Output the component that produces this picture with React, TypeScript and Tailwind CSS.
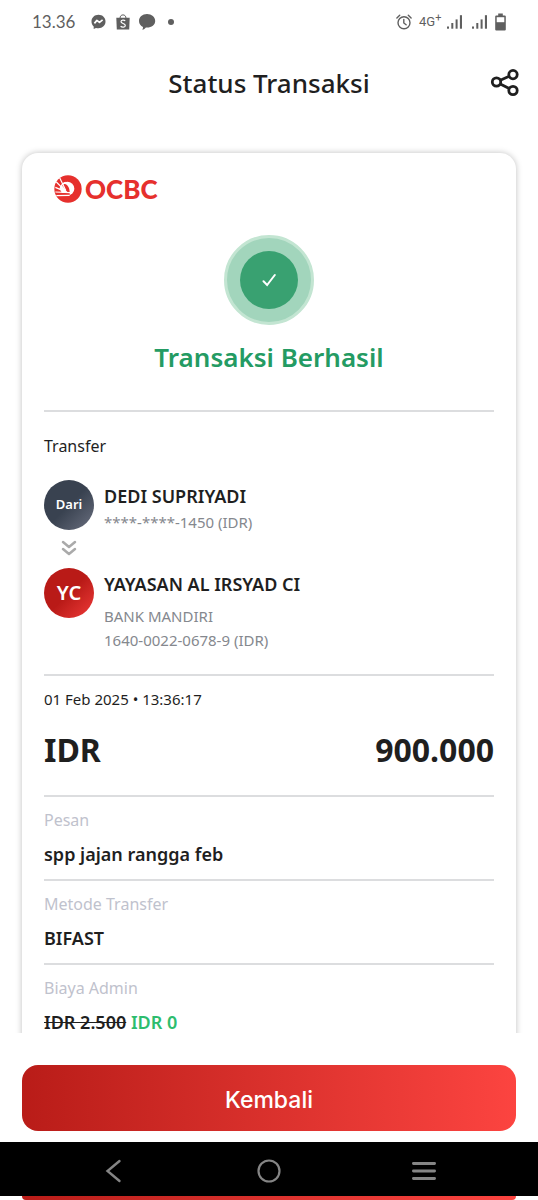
import type { ReactNode } from "react";

function SignalIcon() {
  return (
    <svg viewBox="0 0 15 14" className="h-3.5 w-[15px]" fill="#5f5f5f">
      <rect x="0" y="11.5" width="2" height="2.2" />
      <rect x="4.3" y="8" width="2" height="5.7" />
      <rect x="8.6" y="4.4" width="2" height="9.3" />
      <rect x="12.9" y="0.2" width="2.1" height="13.5" />
    </svg>
  );
}

function StatusBar() {
  return (
    <div className="flex h-11 shrink-0 items-center justify-between px-8 text-[#5f5f5f]">
      <div className="flex items-center">
        <span className="w-[59px] font-['Lato',sans-serif] text-[17px]">13.36</span>
        <svg viewBox="0 0 15 16" className="mr-2.5 h-4 w-[15px]">
          <path
            d="M7.5.8C3.5.8.5 3.7.5 7.5c0 2 .8 3.7 2.2 4.9v2.6l2.3-1.1c.8.2 1.6.3 2.5.3 4 0 7-2.9 7-6.7S11.5.8 7.5.8z"
            fill="#5f5f5f"
          />
          <path
            d="M3.4 9.4l2.5-3 2.6 2 3.1-2.5"
            fill="none"
            stroke="#fff"
            strokeWidth="1.7"
            strokeLinejoin="round"
          />
        </svg>
        <svg viewBox="0 0 14 16" className="mr-2 h-4 w-3.5">
          <path d="M.3 3.8h13.4l-.5 11.6H.8z" fill="#5f5f5f" />
          <path d="M4 4.5C4 2 5.3.9 7 .9s3 1.1 3 3.6" fill="none" stroke="#5f5f5f" />
          <path
            d="M9.2 6.9C8.3 5.9 5 5.8 5 7.7c0 2 4.3 1.5 4.3 3.7 0 2-3.2 2.2-4.7.8"
            fill="none"
            stroke="#fff"
            strokeWidth="1.2"
          />
        </svg>
        <svg viewBox="0 0 18 16" className="h-4 w-[18px]" fill="#5f5f5f">
          <path d="M9 .1C4.4.1 1 3.1 1 7c0 2.7 1.5 4.8 4 5.900 0 1.200-.2 2-.7 2.800 1.600-.3 2.700-.9 3.600-2.200H9c4.700 0 8.200-2.800 8.200-6.600S13.600.1 9 .1z" />
        </svg>
        <span className="ml-3 size-1.5 rounded-full bg-[#5f5f5f]" />
      </div>
      <div className="flex items-center">
        <svg
          viewBox="0 0 16 16"
          className="size-4"
          fill="none"
          stroke="#5f5f5f"
          strokeWidth="1.4"
          strokeLinecap="round"
        >
          <circle cx="8" cy="8.7" r="6" />
          <path d="M7.8 5.5v3.5l2.3 1.8M.9 4l2.8-2.7M15.1 4l-2.8-2.7" />
        </svg>
        <span className="w-[35px] pl-[7px] font-['Roboto',sans-serif] text-[13px]">
          4G<sup className="text-[11px]">+</sup>
        </span>
        <SignalIcon />
        <span className="w-2.5" />
        <SignalIcon />
        <svg viewBox="0 0 11 18" className="ml-2 h-[18px] w-[11px]">
          <path d="M3.2.5h4.6v2h2a1 1 0 0 1 1 1v13a1 1 0 0 1-1 1H1.200a1 1 0 0 1-1-1v-13a1 1 0 0 1 1-1h2z" fill="#5f5f5f" />
          <path d="M1.7 4.2h7.6v5H1.700z" fill="#fff" />
        </svg>
      </div>
    </div>
  );
}

function Header() {
  return (
    <header className="grid h-20 shrink-0 grid-cols-[1fr_auto_1fr] items-center pr-[18px]">
      <h1 className="col-start-2 pb-0.5 pl-[18px] text-[26px] leading-10 font-medium">Status Transaksi</h1>
      <button aria-label="Bagikan" className="justify-self-end">
        <svg
          viewBox="0 0 30 30"
          className="size-[30px]"
          fill="none"
          stroke="#1f1f1f"
          strokeWidth="2.8"
        >
          <circle cx="6.5" cy="13" r="4.2" />
          <circle cx="23" cy="5.6" r="4.2" />
          <circle cx="23" cy="21.5" r="4.2" />
          <path d="M10.3 11.2l8.900-4M10.300 14.900l8.900 4.700" />
        </svg>
      </button>
    </header>
  );
}

function Logo() {
  return (
    <div className="flex h-7 items-center gap-[3px] text-[#e6302d]">
      <svg viewBox="0 0 82 84" className="size-7">
        <circle cx="41" cy="42" r="41" fill="#e6302d" />
        <circle cx="39" cy="41" r="21" fill="#fff" />
        <path d="M39 51L22 30c5-4 12-4 16 0 5 5 8 13 8 21zM10 54h34c3 0 4 5 0 9H14z" fill="#e6302d" />
        <path
          d="M34 46L16 8M32 47L6 21M33 50L3 37M46 53L3 51M46 61L6 62"
          stroke="#fff"
          strokeWidth="3.6"
        />
        <path d="M17 42c2-10 8-17 17-20" fill="none" stroke="#fff" strokeWidth="4" />
      </svg>
      <span className="font-['Lato',sans-serif] text-[26px] leading-7 font-black">OCBC</span>
    </div>
  );
}

function SuccessMark() {
  return (
    <div className="flex size-[90px] items-center justify-center rounded-full border-3 border-[#c3e5d2] bg-[#a2d5bc]">
      <div className="flex size-[58px] items-center justify-center rounded-full bg-[#39a171]">
        <svg viewBox="0 0 14 14" className="size-3.5" fill="none" stroke="#fff" strokeWidth="2" strokeLinecap="round">
          <path d="M1.5 8.3l3.6 3.7L12.8 2" />
        </svg>
      </div>
    </div>
  );
}

function Party({
  badge,
  name,
  children,
}: {
  badge: ReactNode;
  name: string;
  children: ReactNode;
}) {
  return (
    <div className="flex gap-2.5">
      {badge}
      <div className="pt-0.5 text-[15px] leading-6 text-[#85888e]">
        <h3 className="text-lg leading-7 font-semibold text-[#1f1f1f]">{name}</h3>
        {children}
      </div>
    </div>
  );
}

function Detail({ label, children }: { label: string; children: ReactNode }) {
  return (
    <div className="h-[84px] border-t-2 border-[#dcdddf] pt-[11px]">
      <dt className="text-base leading-6 text-[#bfc2cd]">{label}</dt>
      <dd className="pt-2 text-lg leading-7 font-semibold">{children}</dd>
    </div>
  );
}

function Receipt() {
  return (
    <article className="rounded-2xl bg-white px-[22px] pt-[22px] pb-8 shadow-[0_0_6px_rgba(0,0,0,0.25)]">
      <div className="pl-2.5">
        <Logo />
      </div>
      <div className="flex flex-col items-center pt-8 pb-[33px]">
        <SuccessMark />
        <h2 className="pt-3 text-[26px] leading-10 font-semibold text-[#249b63]">
          Transaksi Berhasil
        </h2>
      </div>
      <section className="border-t-2 border-[#dcdddf] py-[22px]">
        <p className="pb-[22px] text-base leading-6">Transfer</p>
        <Party
          name="DEDI SUPRIYADI"
          badge={
            <span className="flex size-[50px] items-center justify-center rounded-full bg-linear-to-br from-[#394250] from-50% to-[#6b7080] text-[13px] font-semibold text-white">
              Dari
            </span>
          }
        >
          <p>****-****-1450 (IDR)</p>
        </Party>
        <div className="flex h-[34px] w-[50px] justify-center pt-1.5">
          <svg viewBox="0 0 16 16" className="size-4" fill="none" stroke="#aaa" strokeWidth="2.5" strokeLinecap="round" strokeLinejoin="round">
            <path d="M2 2l6 5 6-5M2 9l6 5 6-5" />
          </svg>
        </div>
        <Party
          name="YAYASAN AL IRSYAD CI"
          badge={
            <span className="flex size-[50px] items-center justify-center rounded-full bg-linear-to-br from-[#b91a17] from-50% to-[#f03a38] text-xl font-semibold text-white">
              YC
            </span>
          }
        >
          <p className="pt-1.5">BANK MANDIRI</p>
          <p>1640-0022-0678-9 (IDR)</p>
        </Party>
      </section>
      <section className="border-t-2 border-[#dcdddf] pt-[11px] pb-[21px]">
        <p className="pb-[15px] text-[15px] leading-6">01 Feb 2025 • 13:36:17</p>
        <p className="flex justify-between text-[32px] leading-12 font-bold">
          <span>IDR</span>
          <span>900.000</span>
        </p>
      </section>
      <dl>
        <Detail label="Pesan">spp jajan rangga feb</Detail>
        <Detail label="Metode Transfer">BIFAST</Detail>
        <Detail label="Biaya Admin">
          <s>IDR 2.500</s> <span className="text-[#2dbd6e]">IDR 0</span>
        </Detail>
      </dl>
    </article>
  );
}

function NavBar() {
  return (
    <nav className="grid h-[54px] shrink-0 grid-cols-3 items-center justify-items-center bg-black px-[37px] pt-1">
      <button aria-label="Back">
        <svg viewBox="0 0 24 24" className="size-6" fill="none" stroke="#858585" strokeWidth="2.4" strokeLinecap="round">
          <path d="M17.5 2L5.5 12l12 10" />
        </svg>
      </button>
      <button aria-label="Home">
        <svg viewBox="0 0 24 24" className="size-6" fill="none" stroke="#858585" strokeWidth="2.2">
          <circle cx="12" cy="12" r="10.5" />
        </svg>
      </button>
      <button aria-label="Recent apps">
        <svg viewBox="0 0 24 24" className="size-6" fill="none" stroke="#858585" strokeWidth="2.8" strokeLinecap="round">
          <path d="M1.4 4.5h21.2M1.4 12h21.2M1.4 19.5h21.2" />
        </svg>
      </button>
    </nav>
  );
}

function App() {
  return (
    <div className="flex h-screen flex-col bg-white font-['Noto_Sans',sans-serif] text-[#1f1f1f]">
      <StatusBar />
      <Header />
      <main className="min-h-0 flex-1 overflow-hidden px-[22px] pt-[29px]">
        <Receipt />
      </main>
      <footer className="shrink-0 px-[22px] pt-8 pb-[11px]">
        <button className="h-[66px] w-full rounded-2xl bg-linear-to-r from-[#b91c18] to-[#fc4440] pt-1 font-['Inter',sans-serif] text-[23px] font-medium text-white">
          Kembali
        </button>
      </footer>
      <NavBar />
      <div className="mx-[22px] h-1 shrink-0 rounded-b bg-linear-to-r from-[#b91c18] to-[#fc4440]" />
    </div>
  );
}

export default App;
